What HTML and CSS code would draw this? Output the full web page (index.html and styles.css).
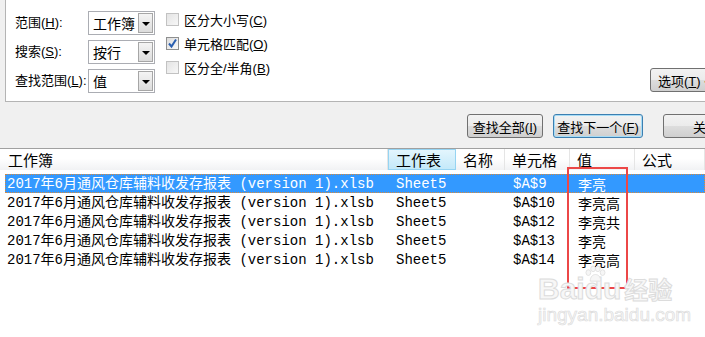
FILE: index.html
```html
<!DOCTYPE html>
<html lang="zh-CN">
<head>
  <meta charset="UTF-8">
  <title>查找和替换</title>
  <link rel="stylesheet" href="styles.css">
</head>
<body>

<div class="page">
  <div class="panel">
    <div class="fields">
      <label class="field-label">范围(<u>H</u>):</label>
      <div class="combo"><span>工作簿</span><i class="drop"></i></div>

      <label class="field-label">搜索(<u>S</u>):</label>
      <div class="combo"><span>按行</span><i class="drop"></i></div>

      <label class="field-label">查找范围(<u>L</u>):</label>
      <div class="combo"><span>值</span><i class="drop"></i></div>
    </div>

    <div class="checks">
      <div class="check disabled"><span class="box"></span><span>区分大小写(<u>C</u>)</span></div>
      <div class="check"><span class="box checked">
        <svg width="11" height="11" viewBox="0 0 11 11"><path d="M2 5.5 L4.5 8.5 L9 1.5" fill="none" stroke="#2a5fb0" stroke-width="2"/></svg>
      </span><span>单元格匹配(<u>O</u>)</span></div>
      <div class="check disabled"><span class="box"></span><span>区分全/半角(<u>B</u>)</span></div>
    </div>

    <button class="btn options">选项(<u>T</u>) &lt;&lt;</button>
  </div>

  <div class="actions">
    <button class="btn find-all">查找全部(<u>I</u>)</button>
    <button class="btn find-next">查找下一个(<u>F</u>)</button>
    <button class="btn close">关闭</button>
  </div>

  <div class="results">
    <div class="head">
      <div class="hcell">工作簿</div>
      <div class="hcell sorted">工作表</div>
      <div class="hcell">名称</div>
      <div class="hcell">单元格</div>
      <div class="hcell">值</div>
      <div class="hcell">公式</div>
    </div>

    <div class="row selected">
      <div class="cell">2017年6月通风仓库辅料收发存报表 (version 1).xlsb</div>
      <div class="cell">Sheet5</div>
      <div class="cell"></div>
      <div class="cell">$A$9</div>
      <div class="cell cn">李亮</div>
      <div class="cell"></div>
    </div>
    <div class="row">
      <div class="cell">2017年6月通风仓库辅料收发存报表 (version 1).xlsb</div>
      <div class="cell">Sheet5</div>
      <div class="cell"></div>
      <div class="cell">$A$10</div>
      <div class="cell cn">李亮高</div>
      <div class="cell"></div>
    </div>
    <div class="row">
      <div class="cell">2017年6月通风仓库辅料收发存报表 (version 1).xlsb</div>
      <div class="cell">Sheet5</div>
      <div class="cell"></div>
      <div class="cell">$A$12</div>
      <div class="cell cn">李亮共</div>
      <div class="cell"></div>
    </div>
    <div class="row">
      <div class="cell">2017年6月通风仓库辅料收发存报表 (version 1).xlsb</div>
      <div class="cell">Sheet5</div>
      <div class="cell"></div>
      <div class="cell">$A$13</div>
      <div class="cell cn">李亮</div>
      <div class="cell"></div>
    </div>
    <div class="row">
      <div class="cell">2017年6月通风仓库辅料收发存报表 (version 1).xlsb</div>
      <div class="cell">Sheet5</div>
      <div class="cell"></div>
      <div class="cell">$A$14</div>
      <div class="cell cn">李亮高</div>
      <div class="cell"></div>
    </div>

    <div class="mark"></div>

    <div class="watermark">
      <svg class="paw" width="30" height="19" viewBox="0 0 24 20">
        <g fill="#f6f6f6" stroke="#e2e2e2">
          <ellipse cx="5" cy="8" rx="2.5" ry="3"/>
          <ellipse cx="10" cy="4" rx="2.5" ry="3"/>
          <ellipse cx="15" cy="4" rx="2.5" ry="3"/>
          <ellipse cx="20" cy="8" rx="2.5" ry="3"/>
          <path d="M7 17 C7 12 10 10 12.5 10 C15 10 18 12 18 17 Z"/>
        </g>
      </svg>
      <div class="wm-logo">Baidu<span class="wm-cn">经验</span></div>
      <div class="wm-url">jingyan.baidu.com</div>
    </div>
  </div>
</div>

</body>
</html>
```

FILE: styles.css
```css
body {
  margin: 0;
  background: #f0f0f0;
  font-family: "Liberation Sans", "Noto Sans CJK SC", sans-serif;
  font-size: 13px;
  color: #000;
  text-autospace: no-autospace;
}
.page {
  width: 705px;
  height: 337px;
  overflow: hidden;
}
u {
  text-decoration: underline;
  text-underline-offset: 1px;
}

/* top options panel */
.panel {
  box-sizing: border-box;
  width: 760px;
  height: 102px;
  margin-left: 5px;
  padding: 11px 35px 9px 9px;
  background: #fff;
  border-left: 1px solid #b4b4b4;
  border-bottom: 1px solid #b4b4b4;
  display: flex;
  align-items: flex-start;
}
.fields {
  display: grid;
  grid-template-columns: 73px 67px;
  row-gap: 5px;
  align-items: center;
}
.field-label {
  font-size: 13px;
  line-height: 24px;
  white-space: nowrap;
}
.combo {
  box-sizing: border-box;
  height: 24px;
  border: 1px solid #abadb3;
  display: flex;
  align-items: center;
  justify-content: space-between;
  padding: 1px 1px 1px 4px;
  font-size: 14px;
}
.drop {
  width: 15px;
  height: 20px;
  box-sizing: border-box;
  border: 1px solid #a6a6a6;
  background: linear-gradient(#f4f4f4, #dcdcdc);
  position: relative;
}
.drop::after {
  content: "";
  position: absolute;
  left: 3px;
  top: 8px;
  border-left: 4px solid transparent;
  border-right: 4px solid transparent;
  border-top: 4px solid #000;
}
.checks {
  margin-left: 11px;
  padding-top: 2px;
  display: flex;
  flex-direction: column;
  gap: 11px;
}
.check {
  height: 13px;
  display: flex;
  align-items: center;
  gap: 5px;
  font-size: 13px;
  white-space: nowrap;
}
.box {
  box-sizing: border-box;
  width: 13px;
  height: 13px;
  border: 1px solid #8e8f8f;
  background: linear-gradient(135deg, #dcdcdc, #fafafa);
  display: flex;
  align-items: center;
  justify-content: center;
}
.check.disabled .box {
  border-color: #c2c2c2;
  background: linear-gradient(135deg, #e4e4e4, #f7f7f7);
}

/* buttons */
.btn {
  box-sizing: border-box;
  height: 24px;
  border: 1px solid #707070;
  border-radius: 3px;
  background: linear-gradient(#f2f2f2 0%, #ebebeb 50%, #dddddd 51%, #cfcfcf 100%);
  font-family: "Liberation Sans", "Noto Sans CJK SC", sans-serif;
  font-size: 13px;
  padding: 0;
  color: #000;
}
.options {
  align-self: flex-end;
  margin-left: auto;
  width: 80px;
  text-align: left;
  padding-left: 7px;
}
.actions {
  width: 760px;
  height: 46px;
  box-sizing: border-box;
  padding-top: 12px;
  padding-left: 467px;
  display: flex;
  gap: 10px;
}
.find-all {
  width: 76px;
}
.find-next {
  width: 90px;
  border-color: #3c7fb1;
  box-shadow: inset 0 0 0 1px #a6dcf6;
}
.close {
  width: 76px;
  margin-left: 10px;
  padding-left: 10px;
}

/* results list */
.results {
  position: relative;
  height: 189px;
  background: #fff;
  border-top: 1px solid #a0a0a0;
}
.head {
  display: grid;
  grid-template-columns: 388px 68px 49px 65px 65px 1fr;
  height: 21px;
  background: linear-gradient(#fff 0%, #fff 45%, #f1f2f4 100%);
  margin-bottom: 4px;
  font-family: "Noto Sans CJK SC", sans-serif;
}
.hcell {
  box-sizing: border-box;
  padding-left: 7px;
  font-size: 15px;
  line-height: 21px;
  border-right: 1px solid #e5e5e5;
}
.hcell:first-child {
  padding-left: 8px;
}
.hcell.sorted {
  background: linear-gradient(#e3f5fd, #c4e9f9);
  border: 1px solid #96d4f2;
  line-height: 19px;
}
.row {
  box-sizing: border-box;
  display: grid;
  grid-template-columns: 383px 68px 49px 65px 65px 1fr;
  height: 19px;
  margin-left: 5px;
  border: 1px solid transparent;
  font-family: "Liberation Mono", "Noto Sans CJK SC", monospace;
  font-size: 14px;
  line-height: 18px;
}
.row.selected {
  background: #3399ff;
  color: #fff;
  border: 1px dotted #d98a3a;
}
.cell {
  padding-left: 7px;
  white-space: nowrap;
  overflow: hidden;
}
.cell:first-child {
  padding-left: 1px;
}
.cell.cn {
  font-family: "Noto Sans CJK SC", sans-serif;
}

/* red annotation box and watermark overlays */
.mark {
  position: absolute;
  left: 567px;
  top: 18px;
  width: 61px;
  height: 122px;
  box-sizing: border-box;
  border: 2px solid #ec4747;
}
.watermark {
  position: absolute;
  left: 538px;
  top: 110px;
  color: #f7f7f7;
  -webkit-text-stroke: 1px #dcdcdc;
  font-family: "Liberation Sans", sans-serif;
}
.paw {
  position: absolute;
  left: 42px;
  top: 6px;
}
.wm-logo {
  margin-top: 17px;
  font-size: 30px;
  font-weight: bold;
  line-height: 26px;
  white-space: nowrap;
}
.wm-cn {
  font-family: "Noto Sans CJK SC", sans-serif;
  font-size: 24px;
  margin-left: 3px;
}
.wm-url {
  font-size: 19px;
  line-height: 20px;
  margin-top: 3px;
  -webkit-text-stroke: 0.6px #dadada;
  white-space: nowrap;
}
```
